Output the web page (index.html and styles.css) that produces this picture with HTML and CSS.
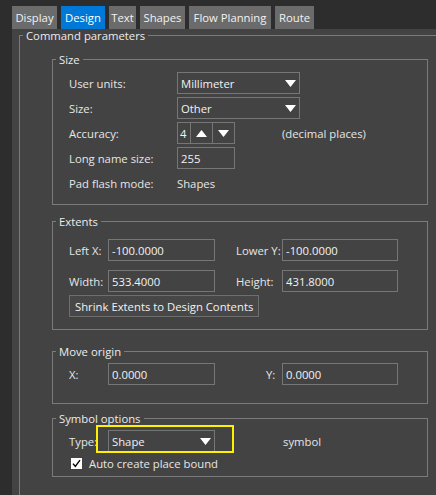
FILE: index.html
```html
<!DOCTYPE html>
<html>
<head>
<meta charset="utf-8">
<link rel="stylesheet" href="styles.css">
</head>
<body>
<div class="app">
  <div class="tabs">
    <div class="tab t-display">Display</div>
    <div class="tab t-design active">Design</div>
    <div class="tab t-text">Text</div>
    <div class="tab t-shapes">Shapes</div>
    <div class="tab t-flow">Flow Planning</div>
    <div class="tab t-route">Route</div>
  </div>
  <div class="panel">
    <fieldset class="gb gb-main">
      <legend>Command parameters</legend>
      <div class="main-body">

        <fieldset class="gb gb-size">
          <legend>Size</legend>
          <div class="gb-body rows">
            <div class="row"><span class="lbl">User units:</span>
              <div class="select wide"><span>Millimeter</span><svg class="tri" width="11" height="7" viewBox="0 0 11 7"><polygon points="0,0 11,0 5.5,7" fill="#fff"/></svg></div>
            </div>
            <div class="row"><span class="lbl">Size:</span>
              <div class="select wide"><span>Other</span><svg class="tri" width="11" height="7" viewBox="0 0 11 7"><polygon points="0,0 11,0 5.5,7" fill="#fff"/></svg></div>
            </div>
            <div class="row"><span class="lbl">Accuracy:</span>
              <div class="spin">
                <span class="spin-val">4</span>
                <span class="spin-btn"><svg width="11" height="7" viewBox="0 0 11 7"><polygon points="0,7 11,7 5.5,0" fill="#fff"/></svg></span>
                <span class="spin-btn"><svg width="11" height="7" viewBox="0 0 11 7"><polygon points="0,0 11,0 5.5,7" fill="#fff"/></svg></span>
              </div>
              <span class="hint">(decimal places)</span>
            </div>
            <div class="row"><span class="lbl">Long name size:</span>
              <div class="input short">255</div>
            </div>
            <div class="row"><span class="lbl">Pad flash mode:</span>
              <span class="value">Shapes</span>
            </div>
          </div>
        </fieldset>

        <fieldset class="gb gb-extents">
          <legend>Extents</legend>
          <div class="gb-body">
            <div class="grid">
              <span class="lbl">Left X:</span>
              <div class="input">-100.0000</div>
              <span class="lbl lbl2">Lower Y:</span>
              <div class="input">-100.0000</div>
              <span class="lbl">Width:</span>
              <div class="input">533.4000</div>
              <span class="lbl lbl2">Height:</span>
              <div class="input">431.8000</div>
            </div>
            <div class="button">Shrink Extents to Design Contents</div>
          </div>
        </fieldset>

        <fieldset class="gb gb-move">
          <legend>Move origin</legend>
          <div class="gb-body grid">
            <span class="lbl">X:</span>
            <div class="input">0.0000</div>
            <span class="lbl lbl-y">Y:</span>
            <div class="input">0.0000</div>
          </div>
        </fieldset>

        <fieldset class="gb gb-symbol">
          <legend>Symbol options</legend>
          <div class="gb-body">
            <div class="grid">
              <span class="lbl">Type:</span>
              <div class="select-wrap">
                <div class="select"><span>Shape</span><svg class="tri" width="11" height="7" viewBox="0 0 11 7"><polygon points="0,0 11,0 5.5,7" fill="#fff"/></svg></div>
                <div class="highlight"></div>
              </div>
              <span></span>
              <span class="hint sym">symbol</span>
            </div>
            <div class="check-row">
              <svg class="check" width="11" height="11" viewBox="0 0 11 11"><rect x="0" y="0" width="11" height="11" fill="#fff"/><path d="M2 5.6 L4.3 8.4 L9 2.2" fill="none" stroke="#000" stroke-width="1.4"/></svg>
              <span>Auto create place bound</span>
            </div>
          </div>
        </fieldset>

      </div>
    </fieldset>
  </div>
</div>
</body>
</html>
```

FILE: styles.css
```css
html, body {
  margin: 0;
  height: 100%;
  overflow: hidden;
  background: #2d2d2d;
}
body {
  font-family: "Open Sans", "Noto Sans", sans-serif;
  font-size: 11.3px;
  color: #e6e6e6;
}
.app {
  margin-left: 12px;
  height: 100%;
  display: flex;
  flex-direction: column;
}
.tabs {
  display: flex;
  gap: 4px;
  padding-top: 6px;
  height: 23px;
  flex: none;
}
.tab {
  background: #6b6b6b;
  color: #f2f2f2;
  line-height: 23px;
  text-align: center;
  white-space: nowrap;
}
.t-display { width: 45px; }
.t-design { width: 44px; }
.t-text { width: 27px; }
.t-shapes { width: 45px; }
.t-flow { width: 82px; }
.t-route { width: 39px; }
.tab.active {
  background: #0078d7;
  color: #ffffff;
}
.panel {
  flex: 1;
  background: #434343;
  padding-left: 7px;
}
fieldset {
  margin: 0;
  padding: 0;
  border: 1px solid #7b7b7b;
  min-width: 0;
  box-sizing: border-box;
}
legend {
  padding: 0 3px;
  margin-left: 3px;
  line-height: 13px;
  color: #ececec;
  white-space: nowrap;
}
.gb-main {
  width: 440px;
  padding-bottom: 60px;
}
.main-body {
  padding: 11px 0 0 32px;
}
.main-body > fieldset {
  width: 376px;
}
.gb-body {
  padding-left: 16px;
}
.gb-size .gb-body {
  padding-top: 6px;
  padding-bottom: 10px;
}
.gb-extents {
  margin-top: 10px;
}
.gb-extents .gb-body {
  padding-top: 11px;
  padding-bottom: 12px;
}
.gb-move {
  margin-top: 15px;
}
.gb-move .gb-body {
  padding-top: 5px;
  padding-bottom: 18px;
}
.gb-symbol {
  margin-top: 8px;
}
.gb-symbol .gb-body {
  padding-top: 5px;
  padding-bottom: 5px;
}
.rows {
  display: flex;
  flex-direction: column;
  gap: 3px;
}
.row {
  display: flex;
  align-items: center;
  height: 22px;
}
.lbl {
  width: 108px;
  flex: none;
  white-space: nowrap;
}
.select, .input, .spin {
  box-sizing: border-box;
  height: 22px;
  border: 1px solid #767676;
  color: #f2f2f2;
}
.select {
  display: flex;
  align-items: center;
  justify-content: space-between;
  padding: 0 3px 0 3px;
}
.select.wide {
  width: 123px;
}
.input {
  display: flex;
  align-items: center;
  padding-left: 3px;
}
.input.short {
  width: 58px;
}
.spin {
  display: flex;
  width: 58px;
}
.spin-val {
  width: 13px;
  padding-left: 2px;
  box-sizing: border-box;
  display: flex;
  align-items: center;
  border-right: 1px solid #767676;
}
.spin-btn {
  width: 21px;
  display: flex;
  align-items: center;
  justify-content: center;
}
.spin-btn + .spin-btn {
  border-left: 1px solid #767676;
}
.hint {
  color: #e6e6e6;
  white-space: nowrap;
}
.row .hint {
  margin-left: 47px;
}
.value {
  color: #e6e6e6;
}
.grid {
  display: grid;
  grid-template-columns: 39px 107px 67px 116px;
  grid-auto-rows: 22px;
  row-gap: 9px;
  align-items: center;
}
.grid .lbl {
  width: auto;
}
.lbl2 {
  padding-left: 21px;
}
.lbl-y {
  padding-left: 51px;
}
.button {
  display: inline-flex;
  align-items: center;
  box-sizing: border-box;
  height: 22px;
  margin-top: 3px;
  padding: 0 5px;
  border: 1px solid #6e6e6e;
  background: #474747;
  color: #f2f2f2;
}
.select-wrap {
  position: relative;
  height: 22px;
}
.select-wrap .select {
  height: 22px;
}
.highlight {
  position: absolute;
  left: -12px;
  top: -5px;
  width: 138px;
  height: 28px;
  box-sizing: border-box;
  border: 2px solid #ffef00;
}
.sym {
  padding-left: 1px;
}
.check-row {
  display: flex;
  align-items: center;
  height: 16px;
  margin-top: 3px;
}
.check {
  margin-left: 2px;
  margin-right: 7px;
}
```
